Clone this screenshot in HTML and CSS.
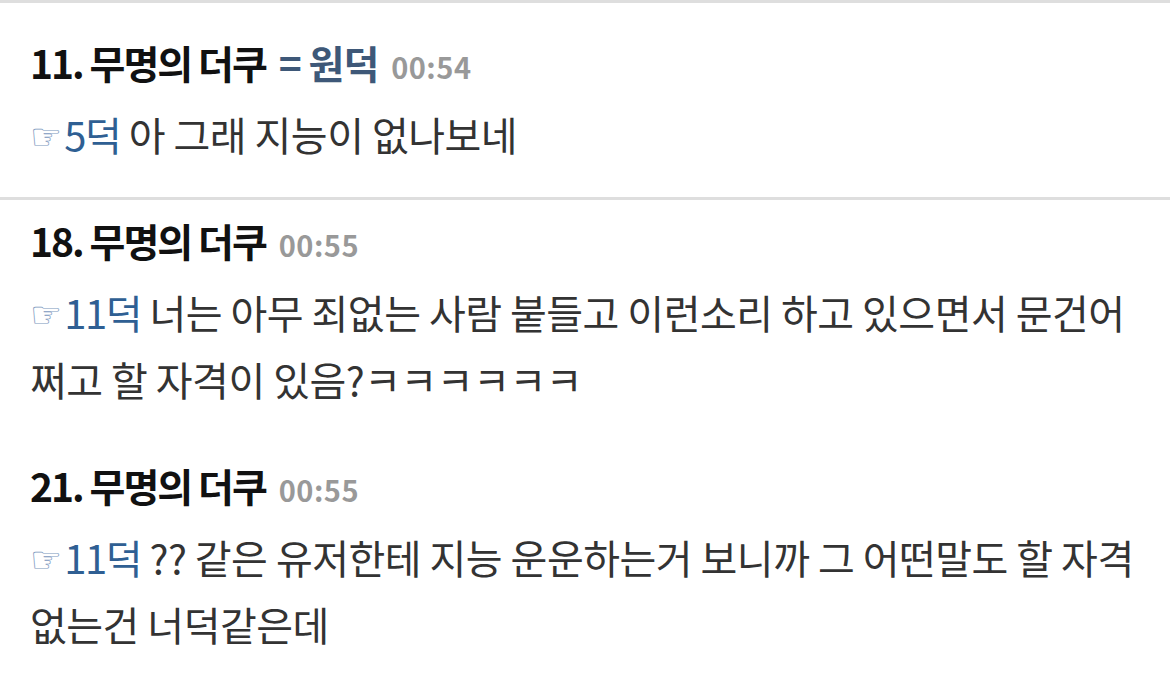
FILE: index.html
```html
<!DOCTYPE html>
<html>
  <head>
    <meta charset="utf-8">
    <title>Comments</title>
    <link rel="stylesheet" href="styles.css">
  </head>
  <body>
    <div class="comment divided first">
      <div class="head">11. 무명의 더쿠 <span class="alias">= 원덕</span> <span class="time">00:54</span></div>
      <div class="text"><span class="ref"><span class="hand">☞</span>5덕</span> 아 그래 지능이 없나보네</div>
    </div>

    <div class="comment divided">
      <div class="head">18. 무명의 더쿠 <span class="time">00:55</span></div>
      <div class="text"><span class="ref"><span class="hand">☞</span>11덕</span> 너는 아무 죄없는 사람 붙들고 이런소리 하고 있으면서 문건어 쩌고 할 자격이 있음?ㅋㅋㅋㅋㅋㅋ</div>
    </div>

    <div class="comment plain">
      <div class="head">21. 무명의 더쿠 <span class="time">00:55</span></div>
      <div class="text"><span class="ref"><span class="hand">☞</span>11덕</span> ?? 같은 유저한테 지능 운운하는거 보니까 그 어떤말도 할 자격 없는건 너덕같은데</div>
    </div>
  </body>
</html>
```

FILE: styles.css
```css
html, body {
  margin: 0;
  padding: 0;
  background: #fff;
  font-family: "Noto Sans CJK KR", "Noto Sans", sans-serif;
}

.comment {
  padding: 15px 20px 28px 30px;
}

.comment.divided {
  border-top: 3px solid #dedede;
}

.comment.first {
  padding-top: 34px;
}

.comment.plain {
  padding-top: 21px;
}

.head {
  font-size: 39px;
  font-weight: 700;
  line-height: 50px;
  color: #111;
  letter-spacing: -2px;
}

.alias {
  margin-left: 6px;
  color: #3e5878;
  letter-spacing: -1px;
}

.time {
  margin-left: 6px;
  font-size: 29px;
  font-weight: 600;
  color: #999;
  letter-spacing: 0.5px;
}

.text {
  margin-top: 11px;
  font-size: 40px;
  line-height: 64px;
  color: #333;
  letter-spacing: -0.5px;
  word-break: keep-all;
}

.ref {
  color: #2f5f93;
  letter-spacing: -1.5px;
}

.hand {
  margin-right: 2px;
  font-family: "DejaVu Sans", sans-serif;
  font-size: 36px;
  color: #7b97be;
  vertical-align: 2px;
  letter-spacing: 0;
}
```
